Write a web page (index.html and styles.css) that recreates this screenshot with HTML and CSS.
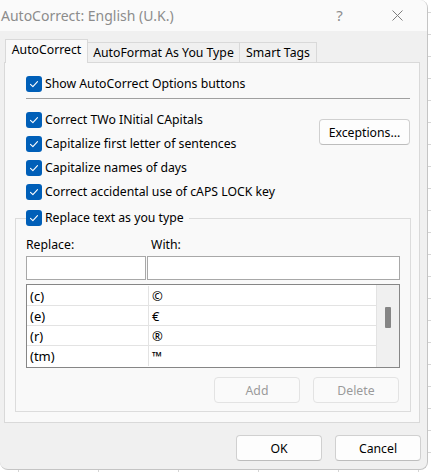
FILE: index.html
```html
<!DOCTYPE html>
<html lang="en">
<head>
<meta charset="utf-8">
<title>AutoCorrect: English (U.K.)</title>
<link rel="stylesheet" href="styles.css">
</head>
<body>
<div class="dialog">
  <div class="titlebar">
    <span class="title">AutoCorrect: English (U.K.)</span>
    <span class="help">?</span>
    <span class="close"><svg width="11" height="11" viewBox="0 0 11 11"><path d="M0.5 0.5 L10.5 10.5 M10.5 0.5 L0.5 10.5" stroke="#7e7e7e" stroke-width="1" fill="none"/></svg></span>
  </div>

  <div class="tabbar">
    <div class="tab tab-active tab-w1">AutoCorrect</div>
    <div class="tab tab-w2">AutoFormat As You Type</div>
    <div class="tab tab-w3">Smart Tags</div>
  </div>

  <div class="panel">
    <label class="check check-first">
      <span class="box"><svg width="16" height="16" viewBox="0 0 16 16"><path d="M4.5 8.3 L6.9 10.6 L11.5 5.6" stroke="#fff" stroke-width="1.1" fill="none" stroke-linecap="round" stroke-linejoin="round"/></svg></span>
      <span>Show AutoCorrect Options buttons</span>
    </label>
    <div class="separator"></div>

    <div class="options">
      <div class="option-list">
        <label class="check">
          <span class="box"><svg width="16" height="16" viewBox="0 0 16 16"><path d="M4.5 8.3 L6.9 10.6 L11.5 5.6" stroke="#fff" stroke-width="1.1" fill="none" stroke-linecap="round" stroke-linejoin="round"/></svg></span>
          <span>Correct TWo INitial CApitals</span>
        </label>
        <label class="check">
          <span class="box"><svg width="16" height="16" viewBox="0 0 16 16"><path d="M4.5 8.3 L6.9 10.6 L11.5 5.6" stroke="#fff" stroke-width="1.1" fill="none" stroke-linecap="round" stroke-linejoin="round"/></svg></span>
          <span>Capitalize first letter of sentences</span>
        </label>
        <label class="check">
          <span class="box"><svg width="16" height="16" viewBox="0 0 16 16"><path d="M4.5 8.3 L6.9 10.6 L11.5 5.6" stroke="#fff" stroke-width="1.1" fill="none" stroke-linecap="round" stroke-linejoin="round"/></svg></span>
          <span>Capitalize names of days</span>
        </label>
        <label class="check">
          <span class="box"><svg width="16" height="16" viewBox="0 0 16 16"><path d="M4.5 8.3 L6.9 10.6 L11.5 5.6" stroke="#fff" stroke-width="1.1" fill="none" stroke-linecap="round" stroke-linejoin="round"/></svg></span>
          <span>Correct accidental use of cAPS LOCK key</span>
        </label>
      </div>
      <button class="btn btn-exceptions">Exceptions...</button>
    </div>

    <fieldset class="group">
      <legend class="legend">
        <label class="check">
          <span class="box"><svg width="16" height="16" viewBox="0 0 16 16"><path d="M4.5 8.3 L6.9 10.6 L11.5 5.6" stroke="#fff" stroke-width="1.1" fill="none" stroke-linecap="round" stroke-linejoin="round"/></svg></span>
          <span>Replace text as you type</span>
        </label>
      </legend>

      <div class="labels">
        <span class="label-replace">Replace:</span>
        <span>With:</span>
      </div>
      <div class="inputs">
        <div class="input input-replace"></div>
        <div class="input input-with"></div>
      </div>

      <div class="list">
        <div class="rows">
          <div class="row"><span class="cell cell-key">(c)</span><span class="cell">©</span></div>
          <div class="row"><span class="cell cell-key">(e)</span><span class="cell">€</span></div>
          <div class="row"><span class="cell cell-key">(r)</span><span class="cell">®</span></div>
          <div class="row"><span class="cell cell-key">(tm)</span><span class="cell">™</span></div>
        </div>
        <div class="scrollbar"><div class="thumb"></div></div>
      </div>

      <div class="group-buttons">
        <button class="btn btn-disabled">Add</button>
        <button class="btn btn-disabled">Delete</button>
      </div>
    </fieldset>
  </div>

  <div class="footer">
    <button class="btn">OK</button>
    <button class="btn">Cancel</button>
  </div>
</div>
</body>
</html>
```

FILE: styles.css
```css
* { box-sizing: border-box; }

html, body {
  margin: 0;
  padding: 0;
}

body {
  width: 431px;
  height: 472px;
  overflow: hidden;
  font-family: "Noto Sans", "Open Sans", sans-serif;
  font-size: 12.25px;
  color: #000;
  background-color: #ffffff;
  background-image:
    repeating-linear-gradient(to right, transparent 0, transparent 18px, #d6d6d6 18px, #d6d6d6 19px, transparent 19px, transparent 80px),
    repeating-linear-gradient(to bottom, transparent 0, transparent 12px, #d6d6d6 12px, #d6d6d6 13px, transparent 13px, transparent 22px);
}

.dialog {
  width: 428px;
  height: 470px;
  background: #f0f0f0;
  border-right: 1px solid #c4c4c4;
  border-bottom: 1px solid #c4c4c4;
  border-radius: 0 8px 8px 8px;
  overflow: hidden;
  display: flex;
  flex-direction: column;
}

/* Title bar */
.titlebar {
  height: 31px;
  background: #fafafa;
  display: flex;
  align-items: center;
  flex: none;
}

.title {
  padding-left: 1px;
  font-size: 14px;
  color: #8c8c8c;
  margin-top: -1px;
}

.help {
  margin-left: auto;
  width: 21px;
  text-align: center;
  font-size: 15px;
  color: #8c8c8c;
  margin-top: -1px;
}

.close {
  width: 21px;
  margin-left: 37px;
  margin-right: 19px;
  display: flex;
  justify-content: center;
  align-items: center;
  height: 11px;
}
.close svg { display: block; }

/* Tabs */
.tabbar {
  margin: 8px 0 0 5px;
  height: 23px;
  display: flex;
  align-items: flex-end;
  flex: none;
}

.tab {
  height: 20px;
  border: 1px solid #d9d9d9;
  border-bottom: none;
  border-left: none;
  background: #f0f0f0;
  display: flex;
  align-items: center;
  justify-content: center;
  white-space: nowrap;
  padding-bottom: 1px;
}

.tab-active {
  height: 24px;
  margin-bottom: -1px;
  border-left: 1px solid #d9d9d9;
  background: #f9f9f9;
  position: relative;
  z-index: 1;
  padding-bottom: 4px;
}

.tab-w1 { width: 83px; }
.tab-w2 { width: 152px; }
.tab-w3 { width: 77px; }

/* Panel */
.panel {
  margin-left: 4px;
  width: 416px;
  border: 1px solid #d9d9d9;
  background: #f9f9f9;
  padding-bottom: 10px;
  flex: none;
}

.check {
  display: flex;
  align-items: center;
  gap: 3px;
  height: 16px;
  line-height: 16px;
  white-space: nowrap;
}

.box {
  width: 16px;
  height: 16px;
  border-radius: 3px;
  background: #005fb8;
  flex: none;
}
.box svg { display: block; }

.check-first {
  margin: 13px 0 0 21px;
}

.separator {
  height: 1px;
  background: #a0a0a0;
  margin: 6px 9px 0 21px;
}

.options {
  display: flex;
  margin: 13px 0 0 21px;
}

.option-list {
  display: flex;
  flex-direction: column;
  gap: 8px;
}

.btn {
  font-family: inherit;
  font-size: inherit;
  color: #000;
  height: 26px;
  width: 86px;
  padding: 0;
  background: #fdfdfd;
  border: 1px solid #d0d0d0;
  border-bottom-color: #bdbdbd;
  border-radius: 4px;
}

.btn-exceptions {
  width: 91px;
  margin: 7px 9px 0 auto;
}

.btn-disabled {
  color: #9a9a9a;
  background: #fafafa;
  border-color: #e3e3e3;
}

/* Group box */
.group {
  margin: 10px 8px 0 10px;
  border: 1px solid #dcdcdc;
  padding: 0 10px 8px 10px;
  min-width: 0;
}

.legend {
  padding: 0 5px 0 0;
  height: 16px;
}

.labels {
  margin-top: 11px;
  display: flex;
  line-height: 16px;
}

.label-replace { width: 125px; }

.inputs {
  display: flex;
  gap: 1px;
  margin-top: 3px;
}

.input {
  height: 24px;
  background: #fff;
  border: 1px solid #a8a8a8;
}
.input-replace { width: 120px; }
.input-with { flex: 1; }

.list {
  margin-top: 4px;
  height: 84px;
  border: 1px solid #868686;
  background: #fff;
  display: flex;
}

.rows {
  flex: 1;
  border-right: 1px solid #e3e3e3;
  padding-top: 1px;
  overflow: hidden;
}

.row {
  height: 20px;
  border-bottom: 1px solid #e3e3e3;
  display: flex;
  align-items: center;
  line-height: 18px;
}
.row:last-child { border-bottom: none; }

.cell {
  padding-left: 3px;
  font-size: 13px;
}

.cell-key {
  width: 122px;
  height: 100%;
  border-right: 1px solid #e3e3e3;
  display: flex;
  align-items: center;
}

.scrollbar {
  width: 22px;
  background: #f0f0f0;
  padding: 22px 0 0 8px;
}

.thumb {
  width: 6px;
  height: 21px;
  background: #858585;
  border-radius: 1px;
}

.group-buttons {
  margin: 9px 1px 0 0;
  display: flex;
  justify-content: flex-end;
  gap: 13px;
}

/* Footer */
.footer {
  margin: 12px 6px 0 0;
  display: flex;
  justify-content: flex-end;
  gap: 13px;
  flex: none;
}
```
